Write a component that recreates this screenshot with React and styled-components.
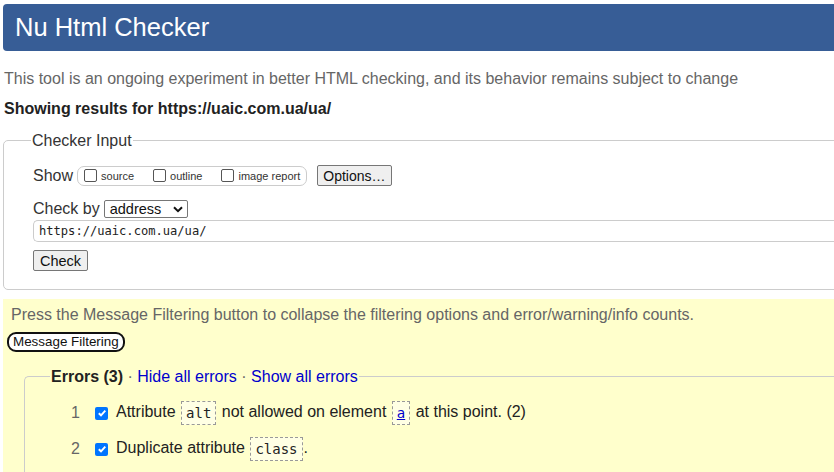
import React from "react";
import styled, { createGlobalStyle } from "styled-components";

const Global = createGlobalStyle`
  html, body { margin: 0; padding: 0; background: #fff; overflow: hidden; }
  body { font-family: "Liberation Sans", Arial, sans-serif; color: #222; }
`;

const Page = styled.div`
  width: 900px;
  padding: 4px 0 0 3px;
`;

const Header = styled.h1`
  margin: 0;
  height: 47px;
  line-height: 46px;
  padding-left: 12px;
  background: #375d96;
  color: #fff;
  font-size: 25.5px;
  font-weight: normal;
  border-radius: 4px 0 0 4px;
`;

const Intro = styled.p`
  margin: 18px 0 0 1px;
  font-size: 16px;
  line-height: 19px;
  color: #666;
`;

const Showing = styled.p`
  margin: 11px 0 0 1px;
  font-size: 16px;
  line-height: 19px;
  font-weight: bold;
  color: #222;
`;

const Fieldset = styled.fieldset`
  margin: 13px 0 0 0;
  border: 1px solid #ccc;
  border-radius: 5px;
  padding: 0 0 18px 29px;
`;

const Legend = styled.legend`
  margin-left: -2px;
  padding: 0 1px;
  font-size: 16px;
  line-height: 19px;
  color: #333;
`;

const Row = styled.div`
  display: flex;
  align-items: center;
  margin-top: ${(p) => p.$mt || 0}px;
  font-size: 16px;
`;

const Label = styled.span`
  font-size: 16px;
  color: #333;
`;

const Pill = styled.div`
  display: flex;
  align-items: center;
  height: 18px;
  margin-left: 4px;
  padding: 0 6px;
  border: 1px solid #ccc;
  border-radius: 7px;
`;

const Opt = styled.label`
  display: flex;
  align-items: center;
  font-size: 11px;
  color: #333;
  margin-right: ${(p) => p.$mr || 0}px;
`;

const Box = styled.span`
  width: 11px;
  height: 11px;
  border: 1px solid #555;
  border-radius: 2px;
  margin-right: 4px;
  background: #fff;
`;

const Button = styled.button`
  font-family: "Liberation Sans", Arial, sans-serif;
  font-size: ${(p) => p.$fs || 14.5}px;
  color: #111;
  background: #efefef;
  border: 1px solid #767676;
  border-radius: 2px;
  height: 21px;
  padding: 0 ${(p) => p.$px || 6}px;
  margin-left: ${(p) => p.$ml || 0}px;
`;

const Select = styled.div`
  display: flex;
  align-items: center;
  justify-content: space-between;
  width: 84px;
  height: 18px;
  box-sizing: border-box;
  margin-left: 4px;
  padding: 0 4px 0 5px;
  border: 1px solid #767676;
  border-radius: 2px;
  font-size: 14.5px;
  color: #111;
`;

const UrlInput = styled.div`
  margin-top: 2px;
  height: 20px;
  line-height: 20px;
  border: 1px solid #ccc;
  border-radius: 5px 0 0 5px;
  border-right: none;
  padding-left: 5px;
  font-family: "DejaVu Sans Mono", monospace;
  font-size: 12.1px;
  color: #222;
`;

const Yellow = styled.div`
  margin-top: 9px;
  background: #ffc;
  padding: 6px 0 0 4px;
  height: 200px;
`;

const Note = styled.p`
  margin: 0 0 0 4px;
  font-size: 16px;
  line-height: 19px;
  color: #666;
`;

const FilterButton = styled.button`
  margin-top: 8px;
  font-family: "Liberation Sans", Arial, sans-serif;
  font-size: 13.4px;
  color: #111;
  background: #fff;
  border: 2px solid #111;
  border-radius: 9px;
  height: 20px;
  padding: 0 4px;
  line-height: 14px;
`;

const Errors = styled.fieldset`
  margin: 15px 0 0 17px;
  border: 1px solid #ccc;
  border-right: none;
  border-radius: 5px 0 0 5px;
  padding: 9px 0 20px 0;
`;

const ErrLegend = styled.legend`
  margin-left: 25px;
  padding: 0 1px;
  font-size: 16px;
  line-height: 19px;
  color: #666;
`;

const Strong = styled.strong`
  color: #222;
`;

const Link = styled.a`
  color: #00c;
  text-decoration: none;
`;

const List = styled.ol`
  margin: 0;
  padding: 0;
  list-style: none;
`;

const Item = styled.li`
  display: flex;
  align-items: center;
  height: 36px;
  font-size: 16px;
  color: #222;
`;

const Num = styled.span`
  width: 55px;
  text-align: right;
  color: #666;
`;

const Check = styled.span`
  width: 13px;
  height: 13px;
  margin: 0 8px 0 15px;
  border-radius: 2px;
  background: #0075ff;
  display: flex;
  align-items: center;
  justify-content: center;
`;

const Msg = styled.span`
  white-space: pre;
`;

const Code = styled.code`
  display: inline-block;
  margin: 0 1px;
  padding: 0 4px;
  height: 22px;
  line-height: 22px;
  vertical-align: middle;
  border: 1px dashed #999;
  font-family: "DejaVu Sans Mono", monospace;
  font-size: 14px;
  color: #222;
  background: #ffffe4;
`;

const CodeLink = styled.a`
  color: #00c;
  text-decoration: underline;
`;

const Tick = () => (
  <svg width="10" height="10" viewBox="0 0 10 10">
    <path d="M1.8 5.2 L4 7.3 L8.3 2.6" fill="none" stroke="#fff" strokeWidth="1.9" />
  </svg>
);

const Chevron = () => (
  <svg width="10" height="7" viewBox="0 0 10 7">
    <path d="M1 1.2 L5 5.2 L9 1.2" fill="none" stroke="#111" strokeWidth="2" />
  </svg>
);

export default function App() {
  return (
    <Page>
      <Global />
      <Header>Nu Html Checker</Header>
      <Intro>
        This tool is an ongoing experiment in better HTML checking, and its behavior remains subject to change
      </Intro>
      <Showing>Showing results for https://uaic.com.ua/ua/</Showing>
      <Fieldset>
        <Legend>Checker Input</Legend>
        <Row $mt={15}>
          <Label>Show</Label>
          <Pill>
            <Opt $mr={19}><Box />source</Opt>
            <Opt $mr={19}><Box />outline</Opt>
            <Opt><Box />image report</Opt>
          </Pill>
          <Button $ml={10} $px={5} $fs={14}>Options…</Button>
        </Row>
        <Row $mt={14}>
          <Label>Check by</Label>
          <Select>
            address
            <Chevron />
          </Select>
        </Row>
        <UrlInput>https://uaic.com.ua/ua/</UrlInput>
        <Row $mt={8}>
          <Button $px={6}>Check</Button>
        </Row>
      </Fieldset>
      <Yellow>
        <Note>Press the Message Filtering button to collapse the filtering options and error/warning/info counts.</Note>
        <FilterButton>Message Filtering</FilterButton>
        <Errors>
          <ErrLegend>
            <Strong>Errors (3)</Strong> · <Link href="#">Hide all errors</Link> · <Link href="#">Show all errors</Link>
          </ErrLegend>
          <List>
            <Item>
              <Num>1</Num>
              <Check><Tick /></Check>
              <Msg>
                Attribute <Code>alt</Code> not allowed on element <Code><CodeLink href="#">a</CodeLink></Code> at this point. (2)
              </Msg>
            </Item>
            <Item>
              <Num>2</Num>
              <Check><Tick /></Check>
              <Msg>
                Duplicate attribute <Code>class</Code>.
              </Msg>
            </Item>
          </List>
        </Errors>
      </Yellow>
    </Page>
  );
}
